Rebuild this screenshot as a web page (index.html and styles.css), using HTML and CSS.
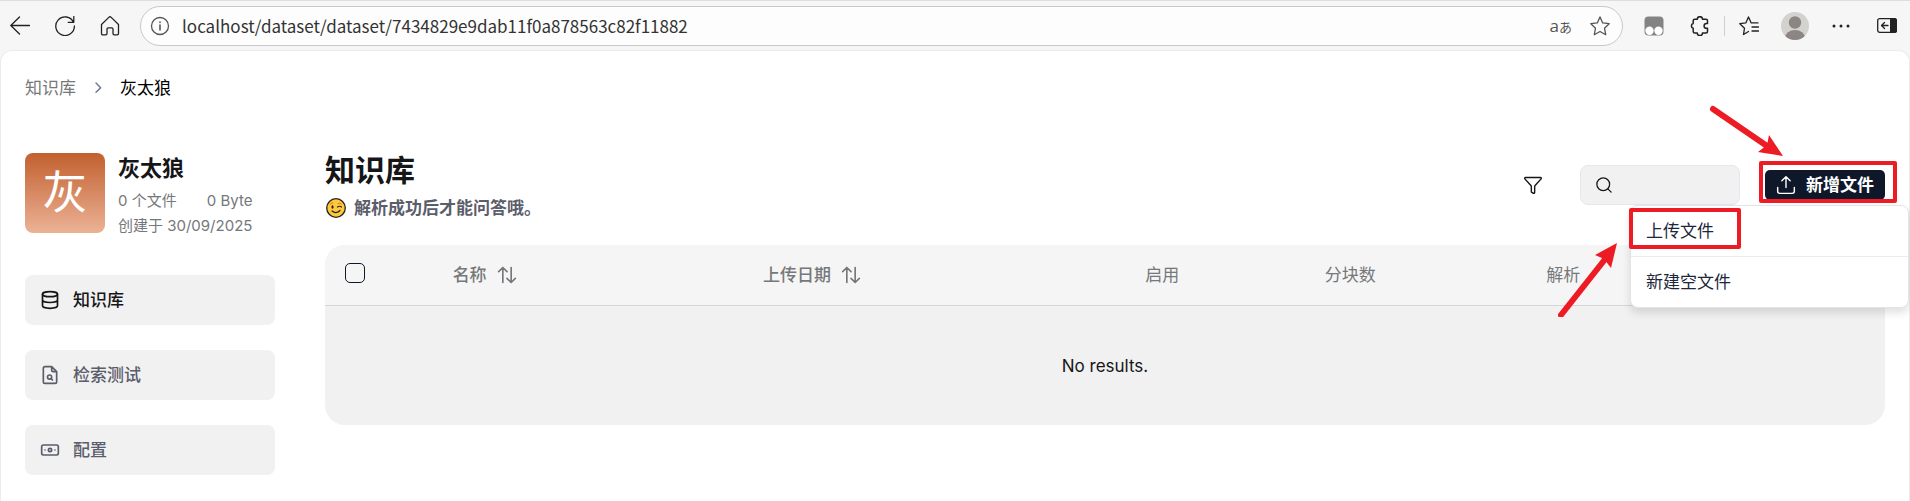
FILE: index.html
```html
<!DOCTYPE html>
<html lang="zh-CN">
<head>
    <meta charset="UTF-8">
    <meta name="viewport" content="width=device-width, initial-scale=1.0">
    <title>知识库</title>
    <link rel="stylesheet" href="styles.css">
</head>
<body>
    <header class="browser-bar">
        <div class="browser-nav">
            <button class="bar-button" aria-label="Back">
                <svg width="20" height="20" viewBox="0 0 20 20"><path d="M19.5 9.5H.8M9.5 1 .8 9.5 9.5 18"/></svg>
            </button>
            <button class="bar-button" aria-label="Reload">
                <svg width="20" height="20" viewBox="0 0 20 20"><path d="M18.5 6.2A9.3 9.3 0 1 0 19.4 10M18.8.5v5.8h-5.6"/></svg>
            </button>
            <button class="bar-button" aria-label="Home">
                <svg width="20" height="20" viewBox="0 0 20 20"><path d="M1.5 8.5 8.8 1.4a1.7 1.7 0 0 1 2.4 0l7.3 7.1v9.1a1.2 1.2 0 0 1-1.2 1.2h-3.1a1.2 1.2 0 0 1-1.2-1.2V13a1.2 1.2 0 0 0-1.2-1.2H8.2A1.2 1.2 0 0 0 7 13v4.6a1.2 1.2 0 0 1-1.2 1.2H2.7a1.2 1.2 0 0 1-1.2-1.2z"/></svg>
            </button>
        </div>
        <div class="address-bar">
            <svg width="20" height="20" viewBox="0 0 20 20"><circle cx="10" cy="10" r="8.5"/><path d="M10 9v5M10 6v.5" stroke-width="1.6"/></svg>
            <input type="text" class="address-input" aria-label="Address" value="localhost/dataset/dataset/7434829e9dab11f0a878563c82f11882">
            <button class="bar-button translate">a<small>あ</small></button>
            <button class="bar-button" aria-label="Favorite">
                <svg width="20" height="20" viewBox="0 0 20 20"><path d="m10 .9 2.700 6 6.500.8-4.700 4.500 1.200 6.500L10 15.500l-5.700 3.200 1.200-6.500L.8 7.700l6.500-.8z"/></svg>
            </button>
        </div>
        <div class="browser-tools">
            <button class="bar-button" aria-label="Extension">
                <svg width="20" height="20" viewBox="0 0 20 20"><rect x=".5" y=".5" width="19" height="19" rx="4" fill="#838383" stroke="none"/><circle cx="5.500" cy="14.800" r="4.200" fill="#fff" stroke="none"/><circle cx="14.500" cy="14.800" r="4.200" fill="#fff" stroke="none"/></svg>
            </button>
            <button class="bar-button" aria-label="Extensions">
                <svg width="20" height="20" viewBox="0 0 20 20"><path d="M4.700 3.300h2.600a2.600 2.600 0 0 1 5.200 0H16a1.500 1.500 0 0 1 1.500 1.500V7.500h-1a2.400 2.400 0 0 0 0 4.800h1v3.200a1.500 1.500 0 0 1-1.500 1.500h-3.500a2.600 2.600 0 0 1-5.200 0H4.700a1.500 1.500 0 0 1-1.500-1.500v-3.200a2.500 2.500 0 0 1 0-4.800V4.800a1.500 1.500 0 0 1 1.500-1.500z" stroke-width="1.500"/></svg>
            </button>
            <span class="bar-divider"></span>
            <button class="bar-button" aria-label="Favorites">
                <svg width="20" height="20" viewBox="0 0 20 20"><path d="m9.500 15.500-5 3L5.500 12.200.8 7.700l6-.8L9.500.9l2.700 6H19M13 11h6.500M13 15h6.500"/></svg>
            </button>
            <button class="bar-button" aria-label="Profile">
                <svg width="28" height="28" viewBox="0 0 28 28"><clipPath id="face"><circle cx="14" cy="14" r="14"/></clipPath><g clip-path="url(#face)" stroke="none"><rect width="28" height="28" fill="#d4d2cf"/><circle cx="14" cy="10.500" r="6.200" fill="#8b8683"/><ellipse cx="14" cy="26" rx="10" ry="8" fill="#8b8683"/></g></svg>
            </button>
            <button class="bar-button" aria-label="Menu">
                <svg width="20" height="20" viewBox="0 0 20 20"><g fill="#222" stroke="none"><circle cx="3" cy="10" r="1.500"/><circle cx="10" cy="10" r="1.500"/><circle cx="17" cy="10" r="1.500"/></g></svg>
            </button>
            <button class="bar-button" aria-label="Sidebar">
                <svg width="20" height="20" viewBox="0 0 20 20"><rect x=".7" y="2.700" width="18.600" height="13.600" rx="2"/><path d="M13 2h4.500A2.500 2.500 0 0 1 20 4.500v10a2.500 2.500 0 0 1-2.500 2.500H13z" fill="#222" stroke="none"/><path d="M11 9.500H4.500M7.500 6.500l-3 3 3 3"/></svg>
            </button>
        </div>
    </header>

    <div class="page">
        <nav class="breadcrumb">
            <a href="#">知识库</a>
            <svg width="16" height="16" viewBox="0 0 24 24"><path d="m9 18.500 7-7-7-7"/></svg>
            <span>灰太狼</span>
        </nav>

        <div class="layout">
            <aside class="sidebar">
                <div class="profile">
                    <div class="avatar">灰</div>
                    <div class="profile-info">
                        <h2>灰太狼</h2>
                        <p><span>0 个文件</span><span>0 Byte</span></p>
                        <p>创建于 30/09/2025</p>
                    </div>
                </div>
                <nav class="side-nav">
                    <a href="#" class="side-link active">
                        <svg width="20" height="20" viewBox="0 0 24 24"><ellipse cx="12" cy="5" rx="9" ry="3"/><path d="M3 5v14a9 3 0 0 0 18 0V5M3 12a9 3 0 0 0 18 0"/></svg>
                        知识库
                    </a>
                    <a href="#" class="side-link">
                        <svg width="20" height="20" viewBox="0 0 24 24"><path d="M14 2H6a2 2 0 0 0-2 2v16a2 2 0 0 0 2 2h12a2 2 0 0 0 2-2V8zM14 2v4a2 2 0 0 0 2 2h4"/><circle cx="11.500" cy="14.500" r="2.500"/><path d="m13.300 16.300 1.700 1.700"/></svg>
                        检索测试
                    </a>
                    <a href="#" class="side-link">
                        <svg width="20" height="20" viewBox="0 0 24 24"><rect x="2" y="6" width="20" height="12" rx="2"/><circle cx="12" cy="12" r="2"/><path d="M6 12h.01M18 12h.01"/></svg>
                        配置
                    </a>
                </nav>
            </aside>

            <main class="main">
                <div class="main-header">
                    <div>
                        <h1>知识库</h1>
                        <p class="hint">
                            <svg width="22" height="22" viewBox="0 0 22 22"><circle cx="11" cy="11" r="9.300" fill="#ffc83d" stroke="#222" stroke-width="1.300"/><ellipse cx="7.500" cy="10" rx="1.100" ry="1.700" fill="#222" stroke="none"/><path d="M12.500 10q2-1.500 4 0M7 14q4 3.500 8-.5" stroke="#222" stroke-width="1.200"/><path d="M5 7.500q.8-1.700 2.800-1.700M13 6.500q2-.8 3.300.4" stroke="#d67d00" stroke-width="1"/></svg>
                            解析成功后才能问答哦。
                        </p>
                    </div>
                    <div class="toolbar">
                        <button class="filter" aria-label="Filter">
                            <svg width="20" height="20" viewBox="0 0 24 24"><path d="M10 20a1 1 0 0 0 .55.9l2 1A1 1 0 0 0 14 21v-7a2 2 0 0 1 .520-1.340L21.740 4.670A1 1 0 0 0 21 3H3a1 1 0 0 0-.740 1.670l7.220 7.990A2 2 0 0 1 10 14z"/></svg>
                        </button>
                        <label class="search">
                            <svg width="18" height="18" viewBox="0 0 24 24"><circle cx="11" cy="11" r="8.500"/><path d="m21.500 21.500-4.300-4.300"/></svg>
                            <input type="text" aria-label="Search">
                        </label>
                        <div class="dropdown">
                            <button class="add-button">
                                <svg width="20" height="20" viewBox="0 0 24 24"><path d="M2 15v4.500A2.500 2.500 0 0 0 4.500 22h15a2.500 2.500 0 0 0 2.500-2.500V15M7 7l5-5 5 5M12 2v13"/></svg>
                                新增文件
                            </button>
                            <div class="menu">
                                <button class="menu-item">上传文件</button>
                                <button class="menu-item">新建空文件</button>
                            </div>
                            <svg class="marks" width="340" height="212" viewBox="0 0 340 212">
                                <path class="mark-line" d="M203 58h134v38H203zM73 105h108v37H73z" stroke-width="4"/>
                                <path class="mark-line" d="M155 4 209 41M3 210 48 153" stroke-width="6"/>
                                <path class="mark-head" d="m225 51-14-21-2 10-9 7zM59 138l-6 25-7-9-9-4z"/>
                            </svg>
                        </div>
                    </div>
                </div>

                <table class="files">
                    <colgroup>
                        <col class="col-check">
                        <col class="col-name">
                        <col class="col-date">
                        <col class="col-enabled">
                        <col class="col-chunks">
                        <col>
                    </colgroup>
                    <thead>
                        <tr>
                            <th><input type="checkbox" class="checkbox" aria-label="Select all"></th>
                            <th><button class="sort">名称 <svg width="20" height="20" viewBox="0 0 24 24"><path d="M7 21V3M2 8l5-5 5 5M17 3v18M12 16l5 5 5-5"/></svg></button></th>
                            <th><button class="sort">上传日期 <svg width="20" height="20" viewBox="0 0 24 24"><path d="M7 21V3M2 8l5-5 5 5M17 3v18M12 16l5 5 5-5"/></svg></button></th>
                            <th>启用</th>
                            <th>分块数</th>
                            <th>解析</th>
                        </tr>
                    </thead>
                    <tbody>
                        <tr>
                            <td colspan="6">No results.</td>
                        </tr>
                    </tbody>
                </table>
            </main>
        </div>
    </div>
</body>
</html>
```

FILE: styles.css
```css
* {
    box-sizing: border-box;
}
body {
    margin: 0;
    min-height: 100vh;
    display: flex;
    flex-direction: column;
    background-color: #f6f6f6;
    font-family: Inter, "Noto Sans CJK SC", sans-serif;
    font-size: 17px;
    line-height: 24px;
    color: #161618;
}
h1, h2, p {
    margin: 0;
}
a {
    color: inherit;
    text-decoration: none;
}
button, input {
    font: inherit;
    color: inherit;
}
button {
    display: flex;
    align-items: center;
    background: none;
    border: none;
    padding: 0;
    cursor: pointer;
}
svg {
    flex: none;
    fill: none;
    stroke: currentColor;
    stroke-width: 2;
    stroke-linecap: round;
    stroke-linejoin: round;
}

/* browser bar */
.browser-bar {
    display: flex;
    align-items: center;
    gap: 8px;
    height: 50px;
    padding-top: 1px;
    border-top: 1px solid #dedede;
    color: #222;
}
.browser-bar svg {
    stroke-width: 1.3;
}
.browser-nav {
    display: flex;
    gap: 25px;
    padding: 0 12px 0 10px;
}
.address-bar {
    flex: 1;
    display: flex;
    align-items: center;
    gap: 12px;
    height: 40px;
    padding: 0 12px 0 9px;
    background-color: #fdfdfd;
    border: 1px solid #c8c8c8;
    border-radius: 20px;
    color: #555;
}
.address-input {
    flex: 1;
    min-width: 0;
    padding: 0;
    border: none;
    outline: none;
    background: none;
    font-family: "Noto Sans CJK SC", sans-serif;
    color: #333;
}
.translate {
    align-items: baseline;
    margin-right: 6px;
    font-family: "Open Sans", "Noto Sans CJK JP", sans-serif;
}
.translate small {
    font-size: 13px;
}
.browser-tools {
    display: flex;
    align-items: center;
}
.browser-tools .bar-button {
    width: 46px;
    justify-content: center;
}
.bar-divider {
    width: 1px;
    height: 20px;
    margin: 0 1px;
    background-color: #cfcfcf;
}

/* page */
.page {
    flex: 1;
    padding: 25px 24px 20px;
    background-color: #fff;
    border: 1px solid #ebebeb;
    border-bottom: none;
    border-radius: 12px 12px 0 0;
}
.breadcrumb {
    display: flex;
    align-items: center;
    gap: 14px;
    color: #75787a;
}
.breadcrumb svg {
    color: #64748b;
}
.breadcrumb span {
    color: #000;
}
.layout {
    display: flex;
    gap: 50px;
    margin-top: 53px;
}
.sidebar {
    flex: none;
    width: 250px;
}
.profile {
    display: flex;
    gap: 13px;
    height: 80px;
}
.avatar {
    flex: none;
    display: flex;
    align-items: center;
    justify-content: center;
    width: 80px;
    height: 80px;
    border-radius: 8px;
    background: linear-gradient(#c2602e, #ecb296);
    font-size: 45px;
    color: #fff;
}
.profile-info {
    font-size: 15px;
    line-height: 25px;
    color: #75787a;
}
.profile-info h2 {
    margin-bottom: 5px;
    font-size: 22px;
    line-height: 30px;
    color: #161618;
}
.profile-info p {
    display: flex;
    justify-content: space-between;
    gap: 24px;
}
.side-nav {
    display: flex;
    flex-direction: column;
    gap: 25px;
    margin-top: 42px;
}
.side-link {
    display: flex;
    align-items: center;
    gap: 13px;
    height: 50px;
    padding: 0 15px;
    border-radius: 8px;
    background-color: #f1f1f1;
    color: #5b5d6b;
    font-weight: 500;
}
.side-link.active {
    color: #161618;
}
.main {
    flex: 1;
    min-width: 0;
}
.main-header {
    display: flex;
    justify-content: space-between;
    align-items: flex-start;
}
.main-header h1 {
    font-size: 30px;
    line-height: 34px;
}
.hint {
    display: flex;
    align-items: center;
    gap: 7px;
    margin-top: 9px;
    font-weight: 600;
    color: #5b5d6b;
}
.toolbar {
    display: flex;
    align-items: center;
    margin-top: 12px;
}
.filter {
    margin-right: 37px;
}
.search {
    display: flex;
    align-items: center;
    width: 160px;
    height: 40px;
    padding: 0 14px;
    gap: 8px;
    margin-right: 25px;
    border: 1px solid #e2e8f0;
    border-radius: 8px;
    background-color: #f1f1f1;
}
.search input {
    flex: 1;
    min-width: 0;
    border: none;
    outline: none;
    background: none;
}
.dropdown {
    position: relative;
}
.add-button {
    gap: 10px;
    width: 120px;
    height: 30px;
    justify-content: center;
    border-radius: 5px;
    background-color: #0f172a;
    color: #fff;
    font-weight: 600;
    white-space: nowrap;
}
.toolbar svg {
    stroke-width: 1.7;
}
.menu {
    position: absolute;
    top: 35px;
    right: -24px;
    width: 279px;
    background-color: #fff;
    border: 1px solid #e2e4e8;
    border-radius: 8px;
    box-shadow: 0 5px 8px rgba(0, 0, 0, 0.12);
    overflow: hidden;
}
.menu-item {
    width: 100%;
    height: 50px;
    padding: 0 15px;
    color: #20263a;
}
.menu-item + .menu-item {
    height: 51px;
    border-top: 1px solid #ececee;
}
.marks {
    position: absolute;
    top: -65px;
    right: -13px;
    pointer-events: none;
}
.mark-line {
    stroke: #ed1c24;
}
.mark-head {
    fill: #ed1c24;
    stroke: none;
}

/* table */
.files {
    width: 100%;
    margin-top: 25px;
    table-layout: fixed;
    border-collapse: separate;
    border-spacing: 0;
    border-radius: 20px;
    overflow: hidden;
    background-color: #f1f1f1;
}
.col-check { width: 6.9%; }
.col-name { width: 19.9%; }
.col-date { width: 24.5%; }
.col-enabled { width: 11.5%; }
.col-chunks { width: 14.2%; }
.files th {
    height: 61px;
    padding: 0 20px;
    border-bottom: 1px solid #d5d6d7;
    background-color: #f5f5f5;
    color: #75787a;
    font-weight: 400;
    text-align: left;
}
.files td {
    height: 119px;
    padding: 0;
    text-align: center;
}
.sort {
    gap: 10px;
    font-weight: 500;
}
.checkbox {
    display: block;
    appearance: none;
    width: 20px;
    height: 20px;
    margin: 0 0 5px;
    border: 1px solid #0f172a;
    border-radius: 5px;
}
```
